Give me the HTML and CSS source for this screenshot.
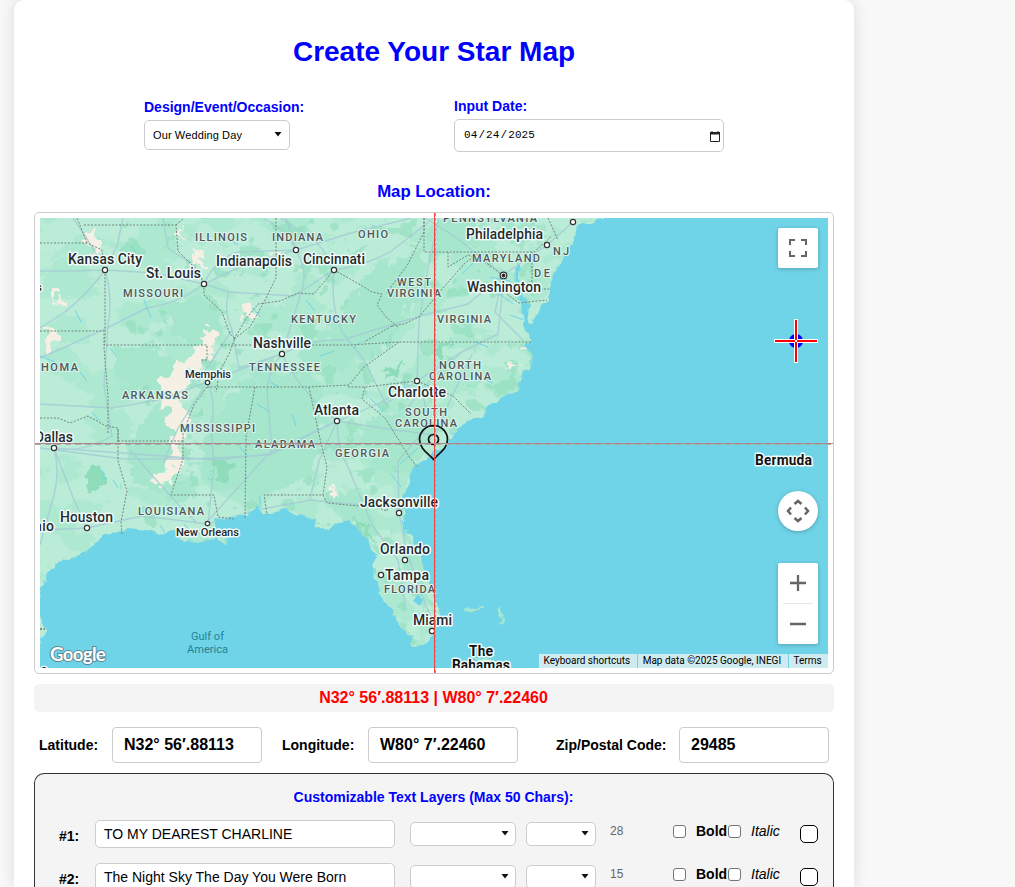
FILE: index.html
```html
<!DOCTYPE html>
<html lang="en">
<head>
<meta charset="utf-8">
<title>Create Your Star Map</title>
<link rel="stylesheet" href="styles.css">
</head>
<body>
<main class="card">
  <h1 class="title">Create Your Star Map</h1>
  <div class="top-fields">
    <div class="field field-event">
      <label class="label">Design/Event/Occasion:</label>
      <div class="select select-event"><span>Our Wedding Day</span><svg class="caret" viewBox="0 0 8 5"><path d="M.5 0h7L4 4.500z"/></svg></div>
    </div>
    <div class="field field-date">
      <label class="label">Input Date:</label>
      <div class="date"><span class="date-parts"><span>04</span><span class="sep">/</span><span>24</span><span class="sep">/</span><span>2025</span></span>
        <svg class="calendar" viewBox="0 0 10 11"><path d="M.5 2h9v8.500h-9z" fill="none" stroke="#222"/><path d="M0 1h10v2.500H0zM1.500 0h1v1h-1zM7.500 0h1v1h-1z" fill="#222"/></svg></div>
    </div>
  </div>
  <h2 class="map-title">Map Location:</h2>
  <div class="map-frame">
    <svg class="map" viewBox="40 218 788 450">
      <defs>
        <filter id="rough" x="0" y="0" width="1" height="1" color-interpolation-filters="sRGB"><feTurbulence type="fractalNoise" baseFrequency=".09" numOctaves="3" seed="4"/><feDisplacementMap in="SourceGraphic" scale="9" xChannelSelector="R" yChannelSelector="G"/></filter>
        <filter id="ragged" x="-.2" y="-.2" width="1.4" height="1.4" color-interpolation-filters="sRGB"><feTurbulence type="fractalNoise" baseFrequency=".08" numOctaves="3" seed="8"/><feDisplacementMap in="SourceGraphic" scale="26" xChannelSelector="R" yChannelSelector="G"/></filter>
        <filter id="woods" x="0" y="0" width="1" height="1" color-interpolation-filters="sRGB"><feTurbulence type="fractalNoise" baseFrequency=".022 .03" numOctaves="5" seed="11"/><feColorMatrix values="0 0 0 0 .645  0 0 0 0 .9  0 0 0 0 .8  26 0 0 0 -13.6"/></filter>
        <filter id="deep" x="0" y="0" width="1" height="1" color-interpolation-filters="sRGB"><feTurbulence type="fractalNoise" baseFrequency=".05" numOctaves="4" seed="23"/><feColorMatrix values="0 0 0 0 .56  0 0 0 0 .87  0 0 0 0 .74  26 0 0 0 -16.6"/></filter>
        <path id="land" d="M30 208H622L606 218 592 222 580 226 575 230 573 241 563 258 553 276 549 283 547 301 537 311 532 324 528 325 530 308 527 304 524 295 519 281 520 266 516 264 516 280 521 305 524 324 528 335 529 342 523 345 531 352 533 358 531 367 523 373 519 384 520 390 507 395 490 405 482 416 467 421 453 435 447 446 437 449 427 458 413 468 407 483 402 498 403 513 407 530 415 547 420 557 425 573 433 593 437 607 436 627 430 641 418 647 410 644 413 637 404 630 398 625 393 610 387 603 380 593 379 583 373 577 373 568 377 553 368 540 358 528 350 520 340 522 327 527 317 529 315 522 303 515 287 510 263 514 257 505 250 512 230 517 217 520 213 528 228 536 227 545 217 537 203 542 193 543 180 538 177 530 163 534 147 530 127 528 107 535 93 543 88 552 73 557 62 560 50 571 43 582 40 600 30 610Z"/>
        <clipPath id="land-clip"><use href="#land"/></clipPath>
      </defs>
      <rect x="40" y="218" width="788" height="450" fill="#70d4e8"/>
      <g filter="url(#rough)">
        <use href="#land" fill="#bbecd7"/>
        <path fill="#bbecd7" d="M30 610l16 17-1 9-15 22z"/>
        <g fill="none" stroke="#a9e7d0" stroke-width="2"><path d="M464 610l22-3M497 607l6 10-3 9"/><path d="M475 659l13-3 7 7-12 4z" fill="#bbecd7"/></g>
      </g>
      <g clip-path="url(#land-clip)">
        <rect x="40" y="218" width="570" height="430" filter="url(#woods)" opacity=".6"/>
        <rect x="120" y="218" width="420" height="430" filter="url(#deep)" opacity=".6"/>
        <g filter="url(#ragged)">
          <g fill="#a6e6cd">
            <path d="M165 310l35-15 24 20-3 27-32 4-18-12zM135 430l24-28 18 14-5 48 28 30-20 10-40-20-12-25zM112 346l45 0 28 18-18 22-44 6z"/>
            <path d="M208 420l48-50 55 6 16 38-15 66-55 18-46-10-13-24zM340 314l34-50 47-14 6 32-45 70-60 18-24-14zM400 412l34 18-24 44-32-6-22-42zM325 500l35-12 20 42-12 12-22-22zM410 520l8 30 14 60-8 4-18-50zM425 222l64 0-16 25-37 14zM500 224l28-6 24 18-36 15z"/>
          </g>
          <g fill="#8fdcba"><path d="M82 474l22-6 6 14-22 10zM212 458l19 3-6 19-15-8zM382 374l24-16-10 18zM434 350l20-12-12 21zM348 520l15 4 9 18z"/></g>
          <g fill="#f5efe4">
            <path d="M209 328l8 5-4 18-12 14-14 12-5 22 10 26-8 14-6 16-8 4 0-24-5-26-4-22 8-20 20-12zM164 464l13-16 6 6-12 28-8 8-8-8zM91 228l12 24-10 2-14-22zM177 232l7-8-4 18zM48 330l12 4-8 18-10 2zM56 292l9-2-8 18zM196 246l8 10-4 16-6-10zM274 254l8 6-3 9zM302 240l7 2-5 6zM244 306l14 3-3 8-12 2zM520 344l8 0 4 8zM510 362l11 1-6 7zM330 489l8 3-7 6z"/>
          </g>
        </g>
        <g class="roads">
          <path d="M40 271l30 0 35-1 50 3 49 11 40-19 52-15 55-17 60-15M105 270l12-24 6-28M105 270q-16-30-32-52M105 270Q82 300 62 314l-22 14M105 270q8 28 3 55l-4 61 8 50q-30 18-58 12M204 284q-22 18-57 24l-40 20-44 20-23 10M204 284l-9-18-27-18-5-30M204 284l25 8 65 4 40-26M296 250q-10-20-33-32M296 250q12 20 6 40l-20 64M296 250l-58 2q-22 6-34 32M334 270q-10-26-32-38l-22-14M334 270q30-4 56-18l44-34M334 270q-4 36 8 62l22 28 22 44 31-23M282 354q30-16 60-14l78-24 48-12 35-29M282 354l-74 28-50 18-46 8-72-4M282 354q-18 20-14 50l4 46-66 73M282 354q20 40 55 67l-68 34-73 4-72 0-84-11M337 421q40-14 80-40l41-27 40-20 6-58M337 421l51 8 47 6M337 421l-18 40-9 38M337 421q0 26 11 46l24 58 26 35 8 50M417 381q14 30 7 50l-26 30 1 52 7 36 16 46 12 30M417 381l2-59 10-60 10-44M503 275l44-30 26-23M503 275l-46-37-32-20M503 275l-8 37 28 28M54 448q6 24 0 47l-14 50M54 448l20 52 13 28M40 530l47-2 55-12 34 4 31 4 50-14 54-10 60 6 65 7M54 448l108 8 54 4 52-6 69-33M130 450l28 32 20 22 18 18M207 382l-29 46-15 35M207 382q10 20 4 46l3 40-6 55M296 250l-10-32M229 292q-6 16 3 38l7 38 43-14M232 330l-34 52M460 354l-28 24-28 34M435 435l13-30 24-51"/>
        </g>
        <g class="rivers"><path d="M40 356l15 6M75 310l6 12M110 348l7 9M131 246l5 6M144 300l7 18M80 372l7 9M92 412l8 9M102 470l3 10M226 238l12 7M218 260l8 6M253 308l7 9M306 300l9 11M270 382l9 5M257 404l11 7M239 446l9 11M292 414l4 12M320 356l14-5M353 349l8-8M370 398l13 13M403 380l5 20M462 274l12-12M490 277l20 4 10 14M497 292l16 12M510 315l14 5M475 342l13 5M480 377l13 6M418 448l-18 16M391 474l10 13M402 520l3 15M417 598l4 7M260 508l0-12M113 480l5 8M160 525l5 8M184 524l8 9"/></g>
        <path fill="#70d4e8" d="M413 601l5-7 5 6-3 6z"/>
      </g>
      <g class="borders">
        <path d="M40 243h47l15 7 3 20v68l-1 10 4 48v38M40 331h64v14h103v15h-6M87 243l-10-25M84 225h92l2 26 8 8 12 12 6 12 0 12 18 17 8 22 5 4-6 16-9 17-4 21M176 225l8-7M276 218v60l-12 24-14 25-16 12M334 270l-20 24-16-1-18 8-22 3-12 15-12 20M221 345h128l49-3h134M207 387h102l40-2 15-18 35-25M207 387l-13 18-11 28 0 26-12 36h43l4 22 16 2M255 387l-9 50-1 82M309 387l11 52 7 28-4 28h-59l3 20M323 495l4 8 52 5 8 3 2-14M348 387h17l52-6 36 15 18 18M365 387l-3 12 23 19 25 40 7 9M334 270l18 10 20 12 10 2-5 11 9 12 12 10M392 326l-28 16M392 326l12-2 15-7 24-29 22-25 13-9M424 218v34h110l18-16M424 218v14l-16 32-22 30M448 252v15l20-12 20 9 14 11M532 252v37h18M507 294l12 9 28-3M548 218l10 22M40 418l18 0 12 5 18-7 18 10 12 2v33l9 30-6 31 1 12M118 441h65M118 430v12"/>
        <path d="M40 629h5" stroke="#333"/>
      </g>
      <g class="city-dots">
        <circle cx="105" cy="270" r="2.6"/><circle cx="204" cy="284" r="2.6"/><circle cx="296" cy="250" r="2.6"/><circle cx="334" cy="270" r="2.6"/><circle cx="282" cy="354" r="2.6"/><circle cx="207.5" cy="382.5" r="2.2"/><circle cx="337" cy="421" r="2.6"/><circle cx="417" cy="381" r="2.6"/><circle cx="547" cy="245" r="2.6"/><circle cx="573" cy="222" r="2.6"/><circle cx="54" cy="448" r="2.6"/><circle cx="87" cy="528" r="2.6"/><circle cx="207.5" cy="523.5" r="2.2"/><circle cx="399" cy="513" r="2.6"/><circle cx="405" cy="560" r="2.6"/><circle cx="381" cy="575" r="2.6"/><circle cx="432" cy="631" r="2.6"/><circle cx="503.5" cy="275.5" r="3.3"/><circle cx="503.5" cy="275.5" r="1.4" fill="#111"/>
      </g>
      <g class="states">
        <text x="195" y="241" textLength="52">ILLINOIS</text><text x="272" y="241" textLength="51">INDIANA</text><text x="358" y="238" textLength="30">OHIO</text><text x="123" y="297" textLength="60">MISSOURI</text><text x="291" y="323" textLength="65">KENTUCKY</text><text x="397" y="286" textLength="34">WEST</text><text x="387" y="297" textLength="54">VIRGINIA</text><text x="437" y="323" textLength="54">VIRGINIA</text><text x="249" y="371" textLength="71">TENNESSEE</text><text x="41" y="371" textLength="37">HOMA</text><text x="122" y="399" textLength="66">ARKANSAS</text><text x="180" y="432" textLength="75">MISSISSIPPI</text><text x="255" y="448" textLength="60">ALABAMA</text><text x="335" y="457" textLength="54">GEORGIA</text><text x="439" y="369" textLength="42">NORTH</text><text x="429" y="380" textLength="62">CAROLINA</text><text x="405" y="416" textLength="42">SOUTH</text><text x="395" y="427" textLength="62">CAROLINA</text><text x="138" y="515" textLength="66">LOUISIANA</text><text x="384" y="593" textLength="51">FLORIDA</text><text x="443" y="222" textLength="94">PENNSYLVANIA</text><text x="472" y="262" textLength="68">MARYLAND</text><text x="534" y="277" textLength="16">DE</text><text x="553" y="255" textLength="16">NJ</text>
      </g>
      <g class="cities">
        <text x="68" y="264" textLength="74">Kansas City</text><text x="146" y="278" textLength="55">St. Louis</text><text x="216" y="266" textLength="76">Indianapolis</text><text x="303" y="264" textLength="62">Cincinnati</text><text x="253" y="348" textLength="58">Nashville</text><text x="314" y="415" textLength="45">Atlanta</text><text x="388" y="397" textLength="58">Charlotte</text><text x="466" y="239" textLength="77">Philadelphia</text><text x="467" y="292" textLength="74">Washington</text><text x="35" y="442" textLength="38">Dallas</text><text x="60" y="522" textLength="53">Houston</text><text x="34" y="531" textLength="20">nio</text><text x="360" y="507" textLength="78">Jacksonville</text><text x="380" y="554" textLength="50">Orlando</text><text x="385" y="580" textLength="44">Tampa</text><text x="413" y="625" textLength="39">Miami</text>
        <g class="small"><text x="185" y="378" textLength="46" lengthAdjust="spacingAndGlyphs">Memphis</text><text x="176" y="536" textLength="63" lengthAdjust="spacingAndGlyphs">New Orleans</text><text x="36" y="291">s</text><text x="41" y="673">s</text></g>
        <g class="country"><text x="755" y="465" textLength="57">Bermuda</text><text x="469" y="656" textLength="24">The</text><text x="452" y="670" textLength="58">Bahamas</text></g>
      </g>
      <g class="sea"><text x="191" y="640" textLength="33" lengthAdjust="spacingAndGlyphs">Gulf of</text><text x="187" y="653" textLength="41" lengthAdjust="spacingAndGlyphs">America</text></g>
      <text class="google" x="50" y="661" textLength="56">Google</text>
      <g fill="none" stroke="#111" stroke-width="1.7"><path d="M433.500 459.500C429 454 419.500 449 419.500 439.500a14 14 0 0 1 28 0C447.500 449 438 454 433.500 459.500z"/><circle cx="433.500" cy="439.500" r="5"/></g>
      <g><circle cx="796" cy="341" r="7" fill="#0000fa"/><path d="M796 319v44M774 341h44" stroke="#fff" stroke-width="4"/><path d="M796 320v42M775 341h42" stroke="#f00" stroke-width="2"/><path d="M795 340h2v2h-2z" fill="#fff"/></g>
    </svg>
    <div class="line-v"></div>
    <div class="line-h"></div>
    <div class="controls">
      <div class="control"><svg viewBox="0 0 40 40"><path d="M12 17v-5h5M23 12h5v5M28 23v5h-5M17 28h-5v-5" fill="none" stroke="#666" stroke-width="2"/></svg></div>
      <div class="controls-low">
        <div class="control round"><svg viewBox="0 0 40 40"><path d="M16.500 13l3.500-3 3.500 3M27 16.500l3 3.500-3 3.500M23.500 27L20 30l-3.500-3M13 16.500L10 20l3 3.500" fill="none" stroke="#666" stroke-width="2.500"/></svg></div>
        <div class="zoom"><svg viewBox="0 0 40 81"><path d="M12 20h16M20 12v16M12 61h16" stroke="#666" stroke-width="2.300"/><path d="M5 40.500h30" stroke="#e6e6e6"/></svg></div>
      </div>
    </div>
    <div class="credits"><span>Keyboard shortcuts</span><span>Map data ©2025 Google, INEGI</span><span>Terms</span></div>
  </div>
  <div class="coordinates">N32° 56′.88113 | W80° 7′.22460</div>
  <div class="location">
    <label class="lat">Latitude:</label><div class="box">N32° 56′.88113</div>
    <label class="lon">Longitude:</label><div class="box">W80° 7′.22460</div>
    <label class="zip">Zip/Postal Code:</label><div class="box">29485</div>
  </div>
  <section class="layers">
    <h3 class="layers-title">Customizable Text Layers (Max 50 Chars):</h3>
    <div class="layer"><b class="num">#1:</b><div class="text">TO MY DEAREST CHARLINE</div>
      <div class="select font"><svg class="caret" viewBox="0 0 8 5"><path d="M.5 0h7L4 4.500z"/></svg></div><div class="select size"><svg class="caret" viewBox="0 0 8 5"><path d="M.5 0h7L4 4.500z"/></svg></div>
      <span class="count">28</span><i class="check"></i><b class="bold">Bold</b><i class="check"></i><em class="italic">Italic</em><i class="swatch"></i></div>
    <div class="layer"><b class="num">#2:</b><div class="text">The Night Sky The Day You Were Born</div>
      <div class="select font"><svg class="caret" viewBox="0 0 8 5"><path d="M.5 0h7L4 4.500z"/></svg></div><div class="select size"><svg class="caret" viewBox="0 0 8 5"><path d="M.5 0h7L4 4.500z"/></svg></div>
      <span class="count">15</span><i class="check"></i><b class="bold">Bold</b><i class="check"></i><em class="italic">Italic</em><i class="swatch"></i></div>
  </section>
</main>
</body>
</html>
```
FILE: styles.css
```css
* { box-sizing: border-box; }
html { height: 100%; overflow: hidden; }
body { margin: 0; height: 100%; overflow: hidden; background: #f8f8f8; font-family: "Liberation Sans", Arial, sans-serif; color: #000; }
.card { display: flex; flex-direction: column; width: 840px; height: 100%; margin-left: 14px; padding: 0 20px; background: #fff; border-radius: 10px 10px 0 0; box-shadow: 0 0 15px rgba(0,0,0,.12); }
.card > * { flex-shrink: 0; }
.title { margin: 0; padding-top: 35px; height: 98px; font-size: 28px; line-height: 34px; text-align: center; color: #00f; }
.top-fields { display: flex; height: 82px; padding-left: 110px; }
.field-event { width: 310px; padding-top: 1px; }
.label { display: block; height: 21px; font-size: 14px; line-height: 16px; font-weight: bold; color: #00f; }
.select { display: flex; align-items: center; justify-content: flex-end; background: #fff; border: 1px solid #ccc; border-radius: 5px; }
.select-event { width: 146px; height: 30px; padding: 0 7px 0 8px; justify-content: space-between; font-size: 11px; letter-spacing: .12px; }
.caret { display: block; width: 8px; height: 5px; margin-bottom: 1px; fill: #111; }
.date { display: flex; align-items: center; justify-content: space-between; width: 270px; height: 33px; padding: 0 3px 1px 9px; border: 1px solid #ccc; border-radius: 5px; font: 11px "Liberation Mono", monospace; letter-spacing: .1px; }
.sep { padding: 0 1px; }
.calendar { width: 10px; height: 11px; margin-top: 2px; }
.map-title { margin: 0; height: 32px; padding-top: 2px; font-size: 16.8px; line-height: 20px; text-align: center; color: #00f; }
.map-frame { position: relative; height: 462px; padding: 5px; border: 1px solid #ccc; border-radius: 5px; }
.map { display: block; width: 788px; height: 450px; }
.map text { font-family: Roboto, sans-serif; paint-order: stroke; stroke-linejoin: round; }
.roads { fill: none; stroke: #a2cbd4; stroke-width: 1.4; stroke-linejoin: round; opacity: .8; }
.rivers { fill: none; stroke: #70d4e8; stroke-width: 1; }
.borders { fill: none; stroke: #71877f; stroke-width: 1; stroke-dasharray: 2 1.5; }
.city-dots { fill: #fff; stroke: #333; stroke-width: 1.2; }
.states text { font-size: 11px; font-weight: 500; fill: #4f575c; stroke: #d9f5ea; stroke-width: 2.2px; }
.cities text { font-size: 14px; font-weight: 500; fill: #24292d; stroke: #effbf8; stroke-width: 3px; }
.cities .small text { font-size: 11.5px; }
.cities .country text { font-weight: 700; fill: #111; }
.sea text { font-size: 11.5px; fill: #258297; }
.map .google { font-family: Lato, sans-serif; font-size: 19px; font-weight: 700; fill: #fff; stroke: #5b8794; stroke-width: 2px; }
.line-v { position: absolute; left: 399px; top: 0; width: 2px; height: 460px; border-left: 1px solid #f04444; border-right: 1px dashed #b99; }
.line-h { position: absolute; left: 0; top: 230px; width: 798px; height: 2px; border-top: 1px solid #a88; background: repeating-linear-gradient(90deg, #aaa 0 6px, transparent 6px 10px); }
.controls { position: absolute; top: 15px; right: 15px; width: 40px; height: 416px; display: flex; flex-direction: column; justify-content: space-between; }
.controls svg { display: block; width: 100%; }
.control, .zoom { width: 40px; background: #fff; border-radius: 2px; box-shadow: 0 1px 4px rgba(0,0,0,.25); }
.control { height: 40px; }
.controls-low { display: flex; flex-direction: column; gap: 32px; }
.control.round { border-radius: 50%; }
.zoom { height: 81px; }
.credits { position: absolute; right: 5px; bottom: 5px; display: flex; gap: 1px; font: 10px/14px Roboto, sans-serif; }
.credits span { background: #d0ebf0; padding: 0 6.4px 0 5px; white-space: nowrap; }
.coordinates { height: 28px; margin-top: 10px; padding-right: 1px; background: #f4f4f4; border-radius: 5px; color: #f00; font-size: 16px; line-height: 27px; font-weight: bold; text-align: center; }
.location { display: flex; align-items: center; height: 36px; margin: 15px 0 10px; font-size: 14px; font-weight: bold; }
.lat { width: 78px; padding-left: 5px; }
.lon { width: 106px; padding-left: 20px; }
.zip { width: 161px; padding-left: 38px; white-space: nowrap; }
.box { width: 150px; height: 36px; padding-left: 11px; border: 1px solid #ccc; border-radius: 4px; font-size: 16px; line-height: 33px; }
.card > .layers { flex: 1 1 0; min-height: 0; overflow: hidden; background: #f4f4f4; border: 1px solid #333; border-bottom: 0; border-radius: 10px 10px 0 0; }
.layers-title { margin: 0; padding: 15px 1px 0 0; height: 46px; color: #00f; font-size: 14px; line-height: 17px; text-align: center; }
.layer { display: flex; align-items: flex-start; height: 43px; padding-left: 24px; font-size: 14px; line-height: 16px; }
.num { width: 36px; padding-top: 8px; }
.text { width: 300px; height: 28px; padding-left: 8px; line-height: 26px; background: #fff; border: 1px solid #ccc; border-radius: 5px; }
.font, .size { height: 24px; margin-top: 2px; padding-right: 6px; }
.font { width: 106px; margin-left: 15px; }
.size { width: 70px; margin-left: 10px; }
.count { width: 77px; padding: 3px 0 0 14px; font-size: 12px; color: #666; }
.check { width: 13px; height: 13px; margin-top: 5px; background: #fff; border: 1px solid #767676; border-radius: 3px; }
.bold { width: 32px; margin-left: 10px; padding-top: 3px; }
.italic { width: 49px; margin-left: 10px; padding-top: 3px; }
.swatch { width: 18px; height: 18px; margin-top: 5px; background: #fff; border: 1px solid #000; border-radius: 5px; }
```
